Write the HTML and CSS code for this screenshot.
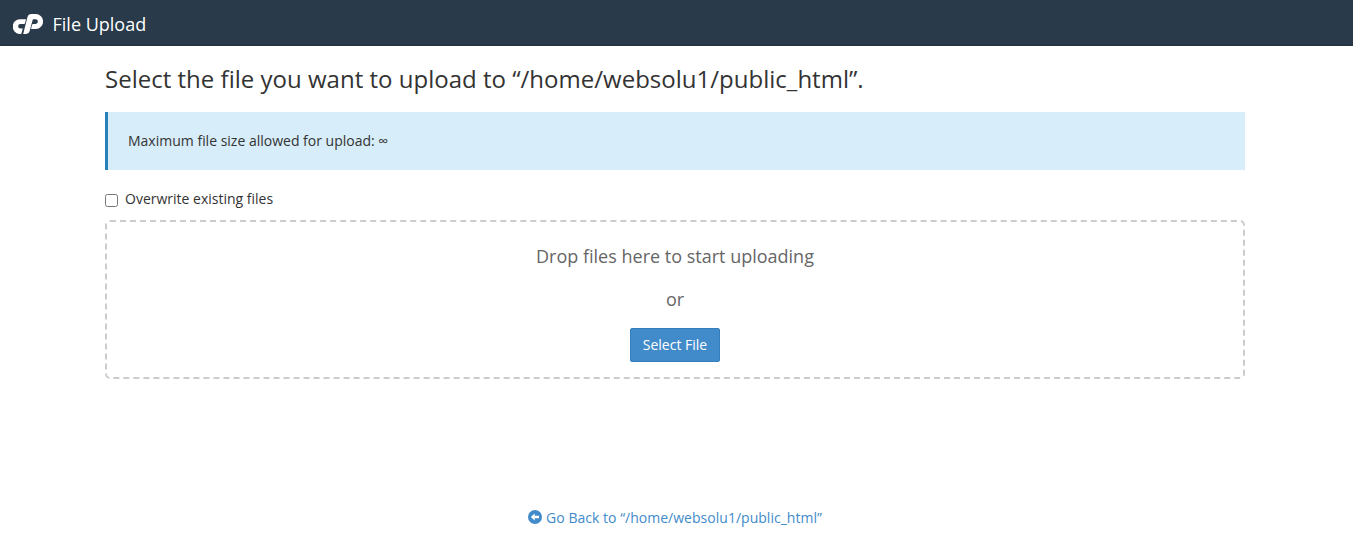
FILE: index.html
```html
<!DOCTYPE html>
<html lang="en">
<head>
<meta charset="utf-8">
<title>File Upload</title>
<link rel="stylesheet" href="styles.css">
</head>
<body>
<header class="navbar">
  <svg class="logo" viewBox="0 0 30 20" aria-hidden="true">
    <path d="M7 5.2H13L12 9.3Q11.8 10 11 10H7.4A2.2 2.2 0 0 0 7.4 14.5H9.8L8.6 19Q8.4 19.9 7.6 19.9H6.8A7.2 7.35 0 0 1 7 5.2Z"/>
    <path d="M10.2 20 14.5 3.1Q15.3 0 18.3 0H22.8A7.2 7.35 0 0 1 22.8 14.9H18L19 11Q19.3 10 20.2 10H22.5A2.4 2.4 0 0 0 22.5 5.2H20.4Q19.9 5.2 19.7 5.8L16.6 17.2Q15.8 20 13.3 20Z"/>
  </svg>
  <span class="navbar-title">File Upload</span>
</header>
<main class="content">
  <h1 class="heading">Select the file you want to upload to “/home/websolu1/public_html”.</h1>
  <div class="callout">Maximum file size allowed for upload: ∞</div>
  <label class="overwrite"><input class="checkbox" type="checkbox"><span>Overwrite existing files</span></label>
  <section class="dropzone">
    <p class="drop-text">Drop files here to start uploading</p>
    <p class="drop-text">or</p>
    <button class="select-button" type="button">Select File</button>
  </section>
  <a class="back-link" href="#">
    <svg class="back-icon" viewBox="0 0 14 14" aria-hidden="true">
      <circle cx="7" cy="7" r="7"/>
      <path d="M2.8 7 6.7 3.6V5.8H11V8.2H6.7V10.4Z"/>
    </svg>
    <span>Go Back to “/home/websolu1/public_html”</span>
  </a>
</main>
</body>
</html>
```
FILE: styles.css
```css
* { box-sizing: border-box; }
body {
  margin: 0;
  background: #fff;
  color: #333;
  font: 14px/20px "Open Sans", sans-serif;
}
.navbar {
  display: flex;
  align-items: center;
  height: 46px;
  padding: 4px 13px 0;
  background: #293a4a;
  border-bottom: 2px solid #263544;
  color: #fff;
}
.logo { width: 30px; height: 20px; margin-right: 9.5px; fill: #fff; }
.navbar-title { font-size: 18px; line-height: 24px; }
.content {
  display: flex;
  flex-direction: column;
  width: 1140px;
  margin-left: 105px;
}
.heading {
  margin: 19px 0 20px;
  font-size: 24px;
  line-height: 27px;
  font-weight: 400;
  letter-spacing: 0.01px;
}
.callout {
  height: 58px;
  padding: 19px 20px;
  border-left: 3px solid #2980b9;
  background: #d7edf9;
}
.overwrite {
  display: flex;
  gap: 7px;
  margin-top: 19px;
  align-self: flex-start;
}
.checkbox { width: 13px; height: 13px; margin: 5px 0 0; }
.dropzone {
  display: flex;
  flex-direction: column;
  align-items: center;
  height: 159px;
  margin-top: 11px;
  padding-top: 22px;
  border: 2px dashed #ccc;
  border-radius: 5px;
}
.drop-text { margin: 0 0 18px; font-size: 18px; line-height: 25px; color: #666; }
.select-button {
  width: 90px;
  height: 34px;
  margin-top: -2px;
  padding: 0;
  border: 1px solid #357ebd;
  border-radius: 2px;
  background: #428bca;
  color: #fff;
  font: inherit;
}
.back-link {
  display: flex;
  align-self: center;
  align-items: center;
  gap: 4px;
  margin-top: 129px;
  color: #428bca;
  text-decoration: none;
  letter-spacing: 0.02px;
}
.back-icon { width: 14px; height: 14px; margin-top: -2px; fill: #428bca; }
.back-icon path { fill: #fff; }
```
